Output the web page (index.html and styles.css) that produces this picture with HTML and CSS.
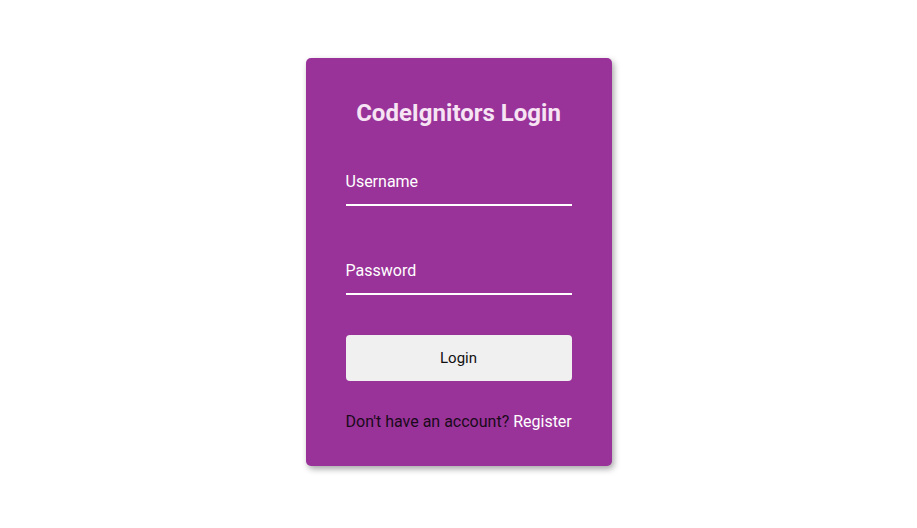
FILE: index.html
```
<!DOCTYPE html>
<html lang="en">
<head>
<meta charset="utf-8">
<title>CodeIgnitors Login</title>
<link rel="stylesheet" href="styles.css">
</head>
<body>
<main class="page">
  <form class="card">
    <h2 class="title">CodeIgnitors Login</h2>
    <input class="field field-first" type="text" placeholder="Username">
    <input class="field field-second" type="password" placeholder="Password">
    <button class="btn" type="button">Login</button>
    <p class="footer">Don't have an account? <a class="link" href="#">Register</a></p>
  </form>
</main>
</body>
</html>
```
FILE: styles.css
```
html, body {
  margin: 0;
  padding: 0;
  background: #ffffff;
  font-family: Roboto, "Liberation Sans", sans-serif;
}
.page {
  box-sizing: border-box;
  min-height: 100vh;
  padding-bottom: 4px;
  display: flex;
  align-items: center;
  justify-content: center;
}
.card {
  box-sizing: border-box;
  width: 306px;
  height: 408px;
  background: #993399;
  border-radius: 5px;
  box-shadow: 2px 3px 6px rgba(0, 0, 0, 0.35);
  padding: 42px 40px 34px;
  display: flex;
  flex-direction: column;
}
.title {
  margin: 0;
  font-size: 24px;
  line-height: 26px;
  font-weight: 700;
  text-align: center;
  color: #f6e3f3;
}
.field {
  box-sizing: border-box;
  width: 100%;
  height: 37px;
  padding: 0 0 11px;
  border: none;
  border-bottom: 2px solid #ffffff;
  background: transparent;
  outline: none;
  font-family: inherit;
  font-size: 16px;
  line-height: 24px;
  color: #ffffff;
}
.field::placeholder {
  color: #ffffff;
  opacity: 1;
}
.field-first {
  margin-top: 43px;
}
.field-second {
  margin-top: 52px;
}
.btn {
  margin-top: 40px;
  height: 46px;
  width: 100%;
  border: none;
  border-radius: 4px;
  background: #f0f0f0;
  font-family: inherit;
  font-size: 15px;
  color: #111111;
}
.footer {
  margin: 31px 0 0;
  font-size: 16px;
  line-height: 20px;
  color: #1a0a1a;
  white-space: nowrap;
}
.link {
  color: #ffffff;
  text-decoration: none;
}
```
